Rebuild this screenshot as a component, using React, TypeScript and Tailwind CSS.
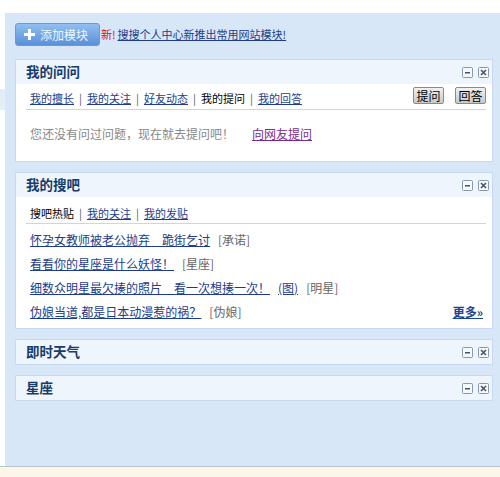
import React from "react";

type Item = { title: string; pic?: boolean; tag: string };

const items: Item[] = [
  { title: "怀孕女教师被老公抛弃　跪街乞讨", tag: "[承诺]" },
  { title: "看看你的星座是什么妖怪！", tag: "[星座]" },
  { title: "细数众明星最欠揍的照片　看一次想揍一次！", pic: true, tag: "[明星]" },
  { title: "伪娘当道,都是日本动漫惹的祸？", tag: "[伪娘]" },
];

const BoxIcons = () => (
  <div className="flex items-center gap-[5px]">
    <svg width="11" height="11" viewBox="0 0 11 11">
      <rect x="0.5" y="0.5" width="10" height="10" rx="1" fill="#f5f8fc" stroke="#8797ad" />
      <rect x="3" y="5" width="5" height="1.5" fill="#44546a" />
    </svg>
    <svg width="11" height="11" viewBox="0 0 11 11">
      <rect x="0.5" y="0.5" width="10" height="10" rx="1" fill="#f5f8fc" stroke="#8797ad" />
      <path d="M3 3 L8 8 M8 3 L3 8" stroke="#44546a" strokeWidth="1.6" />
    </svg>
  </div>
);

const Panel = ({ title, children }: { title: string; children?: React.ReactNode }) => (
  <div className="border border-[#c6d9ee] bg-white">
    <div className="h-[24px] bg-[#eef5fc] flex items-center justify-between pl-[10px] pr-[3px]">
      <span className="text-[13.5px] font-bold text-[#173c6b] leading-none">{title}</span>
      <BoxIcons />
    </div>
    {children}
  </div>
);

const Sep = () => <span className="mx-[5px] text-[#555]">|</span>;

const Tab = ({ label, active }: { label: string; active?: boolean }) =>
  active ? (
    <span className="text-black">{label}</span>
  ) : (
    <a className="text-[#1d3c8c] underline">{label}</a>
  );

const GrayBtn = ({ label }: { label: string }) => (
  <button className="h-[17px] w-[31px] rounded-[2px] border border-[#8a8a8a] bg-gradient-to-b from-[#f2f2f2] to-[#c9c9c9] text-[12px] leading-none text-black">
    {label}
  </button>
);

export default function App() {
  return (
    <div className="w-[500px] h-[477px] flex flex-col bg-white font-['Noto_Sans_CJK_SC','Liberation_Sans',sans-serif] overflow-hidden">
      <div className="h-[13px] bg-white" />
      <div className="flex-1 flex">
        <div className="w-[5px] bg-white">
          <div className="mt-[76px] h-[21px] bg-[#e2edf8]" />
        </div>
        <div className="flex-1 bg-[#d7e7f7] pt-[10px] pl-[10px] pr-[7px]">
          <div className="flex items-center h-[23px]">
            <button className="h-[23px] w-[85px] rounded-[3px] border border-[#6b9bd6] bg-gradient-to-b from-[#92bff0] to-[#5a90d8] flex items-center pl-[8px] gap-[5px]">
              <svg width="11" height="11" viewBox="0 0 11 11">
                <rect x="4" y="0" width="3" height="11" fill="#fff" />
                <rect x="0" y="4" width="11" height="3" fill="#fff" />
              </svg>
              <span className="text-[12px] text-[#f2f7ff] leading-none">添加模块</span>
            </button>
            <span className="ml-[1px] text-[11px] text-[#dd1111]">新!</span>
            <a className="ml-[2px] text-[11px] text-[#1d3c8c] underline">搜搜个人中心新推出常用网站模块!</a>
          </div>

          <div className="mt-[13px] flex flex-col gap-[10px]">
            <Panel title="我的问问">
              <div className="ml-[10px] mr-[6px] pt-[3px]">
                <div className="h-[23px] border-b border-[#d4d4d4] flex justify-between items-start">
                  <div className="pl-[4px] mt-[1px] text-[11px] leading-[20px]">
                    <Tab label="我的擅长" />
                    <Sep />
                    <Tab label="我的关注" />
                    <Sep />
                    <Tab label="好友动态" />
                    <Sep />
                    <Tab label="我的提问" active />
                    <Sep />
                    <Tab label="我的回答" />
                  </div>
                  <div className="flex gap-[11px]">
                    <GrayBtn label="提问" />
                    <GrayBtn label="回答" />
                  </div>
                </div>
                <div className="pl-[4px] mt-[15px] pb-[18px] text-[12px] leading-[18px]">
                  <span className="text-[#888]">您还没有问过问题，现在就去提问吧！</span>
                  <a className="ml-[18px] text-[#7b2a8c] underline">向网友提问</a>
                </div>
              </div>
            </Panel>

            <Panel title="我的搜吧">
              <div className="ml-[10px] mr-[6px]">
                <div className="pl-[4px] pt-[6px] text-[11px] leading-[20px] border-b border-[#d4d4d4]">
                  <Tab label="搜吧热贴" active />
                  <Sep />
                  <Tab label="我的关注" />
                  <Sep />
                  <Tab label="我的发贴" />
                </div>
                <div className="pl-[4px] pt-[4px] pb-[4px]">
                  {items.map((it, i) => (
                    <div key={i} className="flex items-center h-[24px] text-[12px]">
                      <a className="text-[#1d3c8c] underline">{it.title}</a>
                      {it.pic && <a className="ml-[8px] text-[#1d3c8c] underline">(图)</a>}
                      <span className="ml-[8px] text-[#666]">{it.tag}</span>
                      {i === items.length - 1 && (
                        <a className="ml-auto mr-[3px] text-[12px] font-bold text-[#1a4596] underline">更多»</a>
                      )}
                    </div>
                  ))}
                </div>
              </div>
            </Panel>

            <Panel title="即时天气" />
            <Panel title="星座" />
          </div>
        </div>
      </div>
      <div className="h-[11px] border-t border-[#b8c4cc] bg-[#fcf6e8]" />
    </div>
  );
}
